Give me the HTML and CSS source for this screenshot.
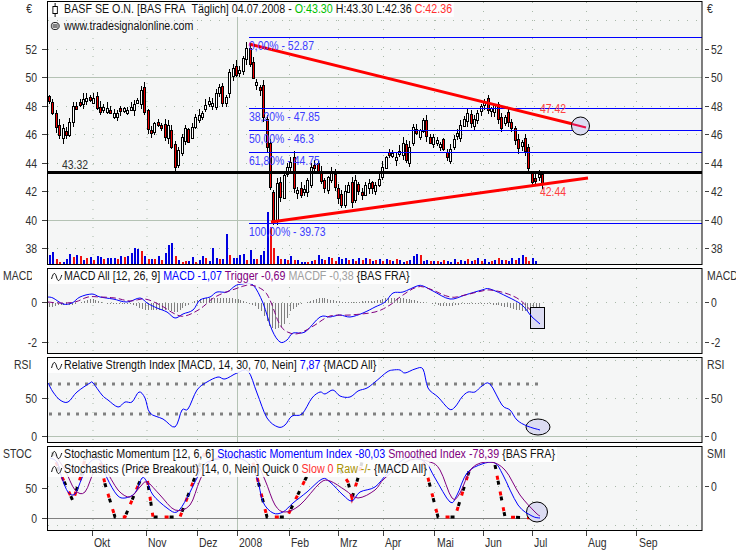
FILE: index.html
```html
<!DOCTYPE html>
<html lang="de">
<head>
<meta charset="utf-8">
<title>BASF SE O.N. Chart</title>
<link rel="stylesheet" href="styles.css">
</head>
<body>
<main class="chart">

<section class="pane">
<svg class="pane-svg" width="750" height="264" viewBox="0 1 750 264">
  <rect class="plot-bg" x="47.5" y="1.5" width="654.5" height="263"/>
  <path class="grid-dot" d="M93 2V264M147 2V264M197.5 2V264M289.5 2V264M338.5 2V264M383.5 2V264M434.5 2V264M483.5 2V264M532.5 2V264M586.5 2V264M636.5 2V264"/>
  <path class="grid-dot" d="M48 20.5H702M48 49.5H702M48 106.5H702M48 134.5H702M48 163.5H702M48 191.5H702M48 248.5H702"/>
  <path class="grid-solid" d="M237.5 2V264M48 77.5H702M48 220.5H702"/>
  <g id="volume"></g>
  <g id="candles"></g>
  <path class="fib" d="M249 37.5H702M249 108.5H702M249 130.5H702M249 152.5H702M249 223.5H702"/>
  <rect class="level" x="48" y="171" width="654" height="3"/>
  <path class="trend" d="M249 44L585 127M271 222L588 178"/>
  <ellipse class="mark" cx="580.5" cy="126" rx="9" ry="9"/>
  <path class="trend-thin" d="M572 124L586 127.500"/>
  <text class="fib-label" x="249" y="50">0,00% - 52.87</text>
  <text class="fib-label" x="249" y="121">38,20% - 47.85</text>
  <text class="fib-label" x="249" y="143">50,00% - 46.3</text>
  <text class="fib-label" x="249" y="165">61,80% - 44.75</text>
  <text class="fib-label" x="249" y="236">100,00% - 39.73</text>
  <text class="ax" x="62" y="169">43.32</text>
  <text class="red-label" x="540" y="113">47.42</text>
  <text class="red-label" x="540" y="196">42.44</text>
  <rect class="frame" x="47.5" y="1.5" width="654.5" height="263"/>
  <path class="tick" d="M42 49.5H47M42 77.5H47M42 106.5H47M42 134.5H47M42 163.5H47M42 191.500H47M42 220.500H47M42 248.500H47M705 49.500H709M705 77.500H709M705 106.500H709M705 134.500H709M705 163.500H709M705 191.500H709M705 220.500H709M705 248.500H709"/>
  <text class="ax end" x="32" y="13">€</text>
  <text class="ax end" x="37" y="54">52</text><text class="ax end" x="37" y="82">50</text><text class="ax end" x="37" y="111">48</text><text class="ax end" x="37" y="139">46</text><text class="ax end" x="37" y="168">44</text><text class="ax end" x="37" y="196">42</text><text class="ax end" x="37" y="225">40</text><text class="ax end" x="37" y="253">38</text>
  <text class="ax" x="707" y="13">€</text>
  <text class="ax" x="711" y="54">52</text><text class="ax" x="711" y="82">50</text><text class="ax" x="711" y="111">48</text><text class="ax" x="711" y="139">46</text><text class="ax" x="711" y="168">44</text><text class="ax" x="711" y="196">42</text><text class="ax" x="711" y="225">40</text><text class="ax" x="711" y="253">38</text>
</svg>
<div class="legend">
  <div class="legend-line">
    <svg class="icon" width="14" height="14" viewBox="0 0 14 14"><path class="icon-line" d="M5 0V14"/><rect class="icon-box" x="2.500" y="3.500" width="5" height="7"/></svg>
    <span>BASF SE O.N. [BAS FRA&nbsp; Täglich] 04.07.2008 - <b class="c-green">O:43.30</b> H:43.30 L:42.36 <b class="c-red">C:42.36</b></span>
  </div>
  <div class="legend-line legend-plain">
    <svg class="icon" width="14" height="14" viewBox="0 0 14 14"><ellipse class="icon-line" cx="5" cy="6" rx="4.500" ry="3.500"/><path class="icon-line" d="M2 5H8M2 7H8"/></svg>
    <span>www.tradesignalonline.com</span>
  </div>
</div>
</section>

<section class="pane">
<svg class="pane-svg" width="750" height="86" viewBox="0 268 750 86">
  <defs>
    <clipPath id="clip-left"><rect x="0" y="268" width="32" height="20"/></clipPath>
    <clipPath id="clip-right"><rect x="704" y="268" width="32" height="20"/></clipPath>
  </defs>
  <rect class="plot-bg" x="47.5" y="268.500" width="654.5" height="85"/>
  <path class="grid-dot" d="M93 269V353M147 269V353M197.500 269V353M289.500 269V353M338.500 269V353M383.500 269V353M434.500 269V353M483.500 269V353M532.500 269V353M586.500 269V353M636.500 269V353M48 302.500H702M48 342.500H702"/>
  <path class="grid-solid" d="M237.500 269V353"/>
  <g id="hist"></g>
  <polyline class="sig curve" points="48,297 53,298 63,304 72,303 80,297 92,294 100,297 113,299 127,302 140,298 147,303 157,308 167,312 175,318 183,314 193,310 200,300 210,297 217,292 227,292 235,286 242,284 253,285 263,303 272,330 280,342 287,340 293,333 305,332 320,317 330,317 340,315 350,317 363,313 375,307 385,302 393,293 403,292 417,286 423,286 433,291 450,299 465,295 482,290 490,289 508,297 522,305 532,317 540,324"/>
  <polyline class="trig curve" points="48,302 60,303 75,302 88,297 100,297 115,298 130,301 145,299 160,305 175,314 185,316 200,309 215,297 235,289 250,285 263,290 270,300 280,325 290,333 300,333 315,325 330,316 350,315 375,312 390,305 400,297 417,287 430,289 450,297 465,295 482,291 490,290 505,293 520,300 535,315"/>
  <rect class="mark" x="530.500" y="307.500" width="14" height="21"/>
  <polyline class="sig" points="530,314 532,317 540,324"/>
  <rect class="frame" x="47.5" y="268.500" width="654.5" height="85"/>
  <path class="tick" d="M42 302.500H47M42 342.500H47M705 302.500H709M705 342.500H709"/>
  <g clip-path="url(#clip-left)"><text class="ax" x="3" y="280">MACD</text></g>
  <text class="ax end" x="37" y="307">0</text><text class="ax end" x="37" y="347">-2</text>
  <g clip-path="url(#clip-right)"><text class="ax" x="707" y="280">MACD</text></g>
  <text class="ax" x="711" y="307">0</text><text class="ax" x="711" y="347">-2</text>
</svg>
<div class="legend">
  <div class="legend-line">
    <svg class="icon" width="14" height="14" viewBox="0 0 14 14"><path class="icon-line" d="M1 9C3 2 5 2 6.500 7S10 12 12.500 5"/></svg>
    <span>MACD All [12, 26, 9] <b class="c-blue">MACD -1,07</b> <b class="c-purple">Trigger -0,69</b> <b class="c-grey">MACDF -0,38</b> {BAS FRA}</span>
  </div>
</div>
</section>

<section class="pane">
<svg class="pane-svg" width="750" height="86" viewBox="0 357 750 86">
  <rect class="plot-bg" x="47.5" y="357.500" width="654.5" height="85"/>
  <path class="grid-dot" d="M93 358V442M147 358V442M197.500 358V442M289.500 358V442M338.500 358V442M383.500 358V442M434.500 358V442M483.500 358V442M532.500 358V442M586.500 358V442M636.500 358V442M48 360.500H702M48 398.500H702"/>
  <path class="grid-solid" d="M237.500 358V442M48 436.500H702"/>
  <path class="rsi-band" d="M49 384H538M49 414H538"/>
  <ellipse class="mark" cx="538" cy="427" rx="12" ry="8"/>
  <polyline class="sig curve" points="48,383 53,392 60,400 68,402 77,392 90,383 93,383 102,395 108,400 118,407 125,402 132,402 139,392 145,398 150,413 163,419 175,427 182,410 188,409 197,390 207,382 218,377 225,379 237,373 248,371 257,393 267,418 278,427 285,425 292,416 302,414 312,398 320,392 325,394 333,390 340,396 350,397 358,391 367,388 375,382 387,372 393,370 400,370 405,373 415,369 423,369 428,388 438,397 449,409 455,407 462,397 468,392 475,392 482,386 490,384 502,405 510,410 517,420 527,426 540,430"/>
  <rect class="frame" x="47.5" y="357.500" width="654.5" height="85"/>
  <path class="tick" d="M42 398.500H47M42 436.500H47M705 398.500H709M705 436.500H709"/>
  <text class="ax" x="14" y="369">RSI</text>
  <text class="ax end" x="37" y="403">50</text><text class="ax end" x="37" y="441">0</text>
  <text class="ax" x="707" y="369">RSI</text>
  <text class="ax" x="711" y="403">50</text><text class="ax" x="711" y="441">0</text>
</svg>
<div class="legend">
  <div class="legend-line">
    <svg class="icon" width="14" height="14" viewBox="0 0 14 14"><path class="icon-line" d="M1 9C3 2 5 2 6.500 7S10 12 12.500 5"/></svg>
    <span>Relative Strength Index [MACD, 14, 30, 70, Nein] <b class="c-blue">7,87</b> {MACD All}</span>
  </div>
</div>
</section>

<section class="pane">
<svg class="pane-svg" width="750" height="85" viewBox="0 446 750 85">
  <rect class="plot-bg" x="47.5" y="446.500" width="654.5" height="84"/>
  <path class="grid-dot" d="M93 447V530M147 447V530M197.500 447V530M289.500 447V530M338.500 447V530M383.500 447V530M434.500 447V530M483.500 447V530M532.500 447V530M586.500 447V530M636.500 447V530M48 486.500H702M48 525.500H702"/>
  <path class="grid-solid" d="M237.500 447V530"/>
  <path class="zero" d="M48 518.500H538"/>
  <path class="stoch-black" d="M52 452L62 477L73 501L80 479L86 455M98 452L105 484L115 517L125 517L140 481L144 462L148 484L153 517L180 517L195 477L205 452M250 452L257 477L267 517L287 517L305 480L310 470M340 470L348 482L352 498L358 478L362 462M420 452L428 478L438 517L455 517L470 468M495 465L505 517L538 518"/>
  <path class="stoch-red" d="M52 452L62 477L73 501L80 479L86 455M98 452L105 484L115 517L125 517L140 481L144 462L148 484L153 517L180 517L195 477L205 452M250 452L257 477L267 517L287 517L305 480L310 470M340 470L348 482L352 498L358 478L362 462M420 452L428 478L438 517L455 517L470 468M495 465L505 517L538 518"/>
  <ellipse class="mark" cx="537" cy="512" rx="10.500" ry="10"/>
  <polyline class="sig curve" points="50,458 57,462 62,478 68,492 75,494 82,478 90,462 100,460 107,478 117,495 125,498 135,493 142,478 147,482 153,495 167,508 177,512 187,498 197,478 207,462 233,458 247,462 257,478 263,502 273,513 283,512 293,503 307,492 322,479 330,482 343,495 352,501 360,492 375,487 388,473 408,457 425,462 435,478 450,502 457,495 467,473 482,464 495,463 503,475 518,505 532,516 540,518"/>
  <polyline class="smooth curve" points="55,455 65,470 75,490 85,492 95,470 105,470 118,490 130,497 140,487 147,482 160,495 175,510 190,505 200,480 212,460 240,455 255,460 265,480 275,505 285,512 300,505 320,483 330,481 345,490 358,498 375,490 385,478 410,460 430,462 440,470 452,498 460,493 472,468 490,462 505,470 520,495 535,512 540,516"/>
  <rect class="frame" x="47.5" y="446.500" width="654.5" height="84"/>
  <path class="tick" d="M42 488.500H47M42 518.500H47M705 486.500H709"/>
  <text class="ax" x="3" y="458">STOC</text>
  <text class="ax end" x="37" y="493">50</text><text class="ax end" x="37" y="523">0</text>
  <text class="ax" x="707" y="458">SMI</text>
  <text class="ax" x="711" y="491">0</text>
</svg>
<div class="legend">
  <div class="legend-line">
    <svg class="icon" width="14" height="14" viewBox="0 0 14 14"><path class="icon-line" d="M1 9C3 2 5 2 6.500 7S10 12 12.500 5"/></svg>
    <span>Stochastic Momentum [12, 6, 6] <b class="c-blue">Stochastic Momentum Index -80,03</b> <b class="c-purple">Smoothed Index -78,39</b> {BAS FRA}</span>
  </div>
  <div class="legend-line">
    <svg class="icon" width="14" height="14" viewBox="0 0 14 14"><path class="icon-line" d="M1 9C3 2 5 2 6.500 7S10 12 12.500 5"/></svg>
    <span>Stochastics (Price Breakout) [14, 0, Nein] Quick 0 <b class="c-red">Slow 0</b> <b class="c-olive">Raw -/-</b> {MACD All}</span>
  </div>
</div>
</section>

<svg class="time-axis" width="750" height="19" viewBox="0 531 750 19">
  <path class="tick" d="M92.500 531V536M146.500 531V536M197.500 531V536M237.500 531V536M289.500 531V536M338.500 531V536M383.500 531V536M434.500 531V536M483.500 531V536M532.500 531V536M586.500 531V536M636.500 531V536"/>
  <text class="ax" x="94" y="547">Okt</text><text class="ax" x="148" y="547">Nov</text><text class="ax" x="199" y="547">Dez</text><text class="ax" x="239" y="547">2008</text><text class="ax" x="291" y="547">Feb</text><text class="ax" x="340" y="547">Mrz</text><text class="ax" x="385" y="547">Apr</text><text class="ax" x="437" y="547">Mai</text><text class="ax" x="485" y="547">Jun</text><text class="ax" x="534" y="547">Jul</text><text class="ax" x="588" y="547">Aug</text><text class="ax" x="639" y="547">Sep</text>
</svg>

</main>
<script src="chart.js"></script>
</body>
</html>
```
FILE: styles.css
```css
html, body { margin: 0; padding: 0; background: #fff; }
.chart {
  width: 750px;
  height: 550px;
  padding-top: 1px;
  box-sizing: border-box;
  display: flex;
  flex-direction: column;
  overflow: hidden;
  font-family: "Liberation Sans", Arial, sans-serif;
}
.pane { position: relative; margin-bottom: 3px; line-height: 0; }
.pane:last-of-type { margin-bottom: 0; }
.pane-svg, .time-axis { display: block; }

.plot-bg { fill: #f5f6f6; }
.frame { fill: none; stroke: #000; stroke-width: 1; }
.grid-dot { fill: none; stroke: #a9b9a9; stroke-width: 1; stroke-dasharray: 1 8; }
.grid-solid { fill: none; stroke: #b4c2b4; stroke-width: 1; }
.tick { fill: none; stroke: #404040; stroke-width: 1; }

.ax, .fib-label, .red-label {
  font-size: 12px;
  transform-box: fill-box;
  transform-origin: 0 50%;
  transform: scaleX(0.87);
}
.ax { fill: #303030; }
.end { text-anchor: end; transform-origin: 100% 50%; }
.fib-label { fill: #3c3cff; }
.red-label { fill: #ff4040; }

.fib { fill: none; stroke: #0000ff; stroke-width: 1; }
.level { fill: #000; }
.trend { fill: none; stroke: #ff0000; stroke-width: 3; }
.trend-thin { fill: none; stroke: #e8104a; stroke-width: 2; }
.mark { fill: #dcdcf2; stroke: #000; stroke-width: 1; }

.wick { stroke: #000; stroke-width: 1; shape-rendering: crispEdges; }
.body-up { fill: #fff; stroke: #000; stroke-width: 1; shape-rendering: crispEdges; }
.body-down { fill: #f00000; stroke: #000; stroke-width: 1; shape-rendering: crispEdges; }
.vol-up { fill: #0000e0; shape-rendering: crispEdges; }
.vol-down { fill: #f01010; shape-rendering: crispEdges; }
.hist-bar { stroke: #808080; stroke-width: 1; shape-rendering: crispEdges; }

.sig { fill: none; stroke: #0000ff; stroke-width: 1; stroke-linejoin: round; }
.trig { fill: none; stroke: #800080; stroke-width: 1; stroke-dasharray: 6 3; }
.smooth { fill: none; stroke: #800080; stroke-width: 1; stroke-linejoin: round; }
.rsi-band { fill: none; stroke: #808080; stroke-width: 3; stroke-dasharray: 3 6; }
.zero { fill: none; stroke: #808080; stroke-width: 1; }
.stoch-black { fill: none; stroke: #000; stroke-width: 3; stroke-dasharray: 4 12; }
.stoch-red { fill: none; stroke: #ff0000; stroke-width: 3; stroke-dasharray: 4 12; stroke-dashoffset: 5; }

.legend {
  position: absolute;
  left: 48px;
  top: 1px;
  display: flex;
  flex-direction: column;
  align-items: flex-start;
  font-size: 12px;
  line-height: 15px;
  color: #101010;
}
.legend-line {
  display: flex;
  align-items: center;
  height: 15px;
  padding: 0 2px 0 3px;
  background: rgba(255, 255, 255, 0.86);
  white-space: pre;
  transform-origin: 0 50%;
  transform: scaleX(0.89);
}
.legend-plain { background: none; margin-top: 2px; }
.icon { flex: none; margin-right: 1px; }
.icon-line { fill: none; stroke: #000; stroke-width: 1; }
.icon-box { fill: #fff; stroke: #000; stroke-width: 1; }
.legend b { font-weight: normal; }
.c-green { color: #00c000; }
.c-red { color: #ff3030; }
.c-blue { color: #0000ff; }
.c-purple { color: #800080; }
.c-grey { color: #a0a0a0; }
.c-olive { color: #a89000; }
```
FILE: chart.js
```js
(function () {
  var NS = "http://www.w3.org/2000/svg";

  var closeKeys = [
    [48,97],[52,113],[55,118],[57,127],[59,135],[62,128],[65,135],[68,125],[71,117],[73,106],[78,107],[82,99],[86,98],[90,100],[94,98],[97,108],[100,112],[105,104],[110,113],[117,113],[122,107],[127,110],[132,107],[137,100],[140,90],[143,107],[147,127],[150,133],[155,123],[160,125],[163,133],[167,140],[168,125],[171,147],[175,167],[178,150],[181,140],[185,128],[189,142],[192,127],[195,117],[202,113],[207,100],[213,103],[218,87],[222,103],[227,97],[230,72],[233,68],[237,75],[242,63],[245,48],[248,50],[252,77],[255,80],[258,87],[262,90],[263,117],[266,120],[268,147],[270,187],[273,220],[274,172],
    [277,183],[280,197],[283,178],[287,167],[292,158],[295,188],[302,195],[307,180],[312,167],[317,167],[323,188],[330,173],[335,187],[340,205],[347,185],[352,202],[355,180],[360,198],[367,180],[372,188],[378,182],
    [383,167],[387,157],[392,153],[397,157],[402,143],[405,160],[410,147],[413,127],[418,137],[423,120],[428,147],[435,133],[438,140],[442,147],[447,157],[452,143],[457,133],[460,125],[468,113],[472,123],[477,113],[483,102],[488,110],[495,105],[500,128],[505,117],[512,128],[517,148],[522,142],[527,157],[528,168],[533,182],[538,174],[541,184]
  ];

  var volumes = [
    9,12,-5,-2,2,5,10,-7,9,-8,4,-6,7,-4,8,7,-5,6,6,6,-5,8,-7,8,11,16,15,-13,8,-5,5,-5,8,-4,11,19,21,-8,4,-2,-3,3,7,-2,4,8,-6,3,16,6,-5,5,30,-9,6,6,9,10,-4,14,5,-5,9,13,52,-37,-16,8,-5,5,-4,8,-4,4,2,2,-2,3,-4,9,5,-4,7,-6,-3,7,5,6,-4,5,-3,6,-4,6,-5,3,-4,5,-3,5,-4,3,-5,4,2,-3,4,8,10,-9,3,4,-3,3,-3,2,-4,3,2,5,-2,4,3,-5,3,-4,6,-3,5,2,-3,4,-6,4,-4,3,6,-4,6,9,-7,-3,6,3
  ];

  var histKeys = [
    [48,5],[60,2],[75,2],[90,-4],[110,2],[130,1],[145,8],[165,7],[175,10],[185,4],[195,-2],[205,-5],[225,-5],[240,-3],[255,4],[262,10],[270,25],[275,27],[283,24],[290,8],[300,2],[310,-2],[320,-5],[330,-3],[345,0],[375,-2],[390,-5],[400,-5],[415,-2],[430,1],[445,4],[460,2],[485,1],[500,3],[515,7],[528,9],[540,9]
  ];

  function lerp(keys, x) {
    for (var k = 1; k < keys.length; k++) {
      if (x <= keys[k][0]) {
        var a = keys[k - 1], b = keys[k];
        return a[1] + (b[1] - a[1]) * (x - a[0]) / (b[0] - a[0]);
      }
    }
    return keys[keys.length - 1][1];
  }

  function sample(x, reference) {
    var best = lerp(closeKeys, x);
    closeKeys.forEach(function (key) {
      if (Math.abs(key[0] - x) <= 1.7 && Math.abs(key[1] - reference) > Math.abs(best - reference)) {
        best = key[1];
      }
    });
    return best;
  }

  function noise(i, salt) {
    var v = Math.sin((i + 1) * 12.9898 + salt * 78.233) * 43758.5453;
    return v - Math.floor(v);
  }

  function add(parent, tag, cls, attrs) {
    var el = document.createElementNS(NS, tag);
    el.setAttribute("class", cls);
    for (var key in attrs) el.setAttribute(key, attrs[key]);
    parent.appendChild(el);
  }

  var candleGroup = document.getElementById("candles");
  var prev = closeKeys[0][1] - 3;
  for (var i = 0; i * 3.4 + 49 <= 542; i++) {
    var x = Math.round(49 + i * 3.4);
    var close = Math.round(sample(x, prev));
    var open = Math.round(prev + (noise(i, 1) - 0.5) * 10);
    var upper = Math.min(open, close), lower = Math.max(open, close);
    if (lower - upper < 3) lower = upper + 3;
    var hi = upper - 1 - Math.round(noise(i, 2) * 5);
    var lo = lower + 1 + Math.round(noise(i, 3) * 5);
    add(candleGroup, "line", "wick", { x1: x + 0.5, x2: x + 0.5, y1: hi, y2: lo });
    add(candleGroup, "rect", close > open ? "body-down" : "body-up", {
      x: x - 0.5, y: upper + 0.5, width: 2, height: lower - upper
    });
    prev = close;
  }

  var volumeGroup = document.getElementById("volume");
  volumes.forEach(function (v, n) {
    var h = Math.abs(v);
    add(volumeGroup, "rect", v > 0 ? "vol-up" : "vol-down", {
      x: Math.round(49 + n * 3.4), y: 264 - h, width: 2, height: h
    });
  });

  var histGroup = document.getElementById("hist");
  for (var hx = 49; hx <= 541; hx += 2.9) {
    var px = Math.round(hx) + 0.5;
    add(histGroup, "line", "hist-bar", { x1: px, x2: px, y1: 302.5, y2: 302.5 + lerp(histKeys, hx) });
  }

  // Round the sampled indicator points into the smooth curves the chart draws.
  document.querySelectorAll(".curve").forEach(function (line) {
    var pts = line.getAttribute("points").trim().split(/\s+/).map(function (p) {
      return p.split(",").map(Number);
    });
    var out = [];
    for (var s = 0; s < pts.length - 1; s++) {
      var p0 = pts[Math.max(s - 1, 0)], p1 = pts[s], p2 = pts[s + 1], p3 = pts[Math.min(s + 2, pts.length - 1)];
      for (var t = 0; t < 1; t += 0.25) {
        var t2 = t * t, t3 = t2 * t;
        var cx = 0.5 * (2 * p1[0] + (p2[0] - p0[0]) * t + (2 * p0[0] - 5 * p1[0] + 4 * p2[0] - p3[0]) * t2 + (3 * p1[0] - p0[0] - 3 * p2[0] + p3[0]) * t3);
        var cy = 0.5 * (2 * p1[1] + (p2[1] - p0[1]) * t + (2 * p0[1] - 5 * p1[1] + 4 * p2[1] - p3[1]) * t2 + (3 * p1[1] - p0[1] - 3 * p2[1] + p3[1]) * t3);
        out.push(cx.toFixed(1) + "," + cy.toFixed(1));
      }
    }
    var last = pts[pts.length - 1];
    out.push(last[0] + "," + last[1]);
    line.setAttribute("points", out.join(" "));
  });
})();
```
